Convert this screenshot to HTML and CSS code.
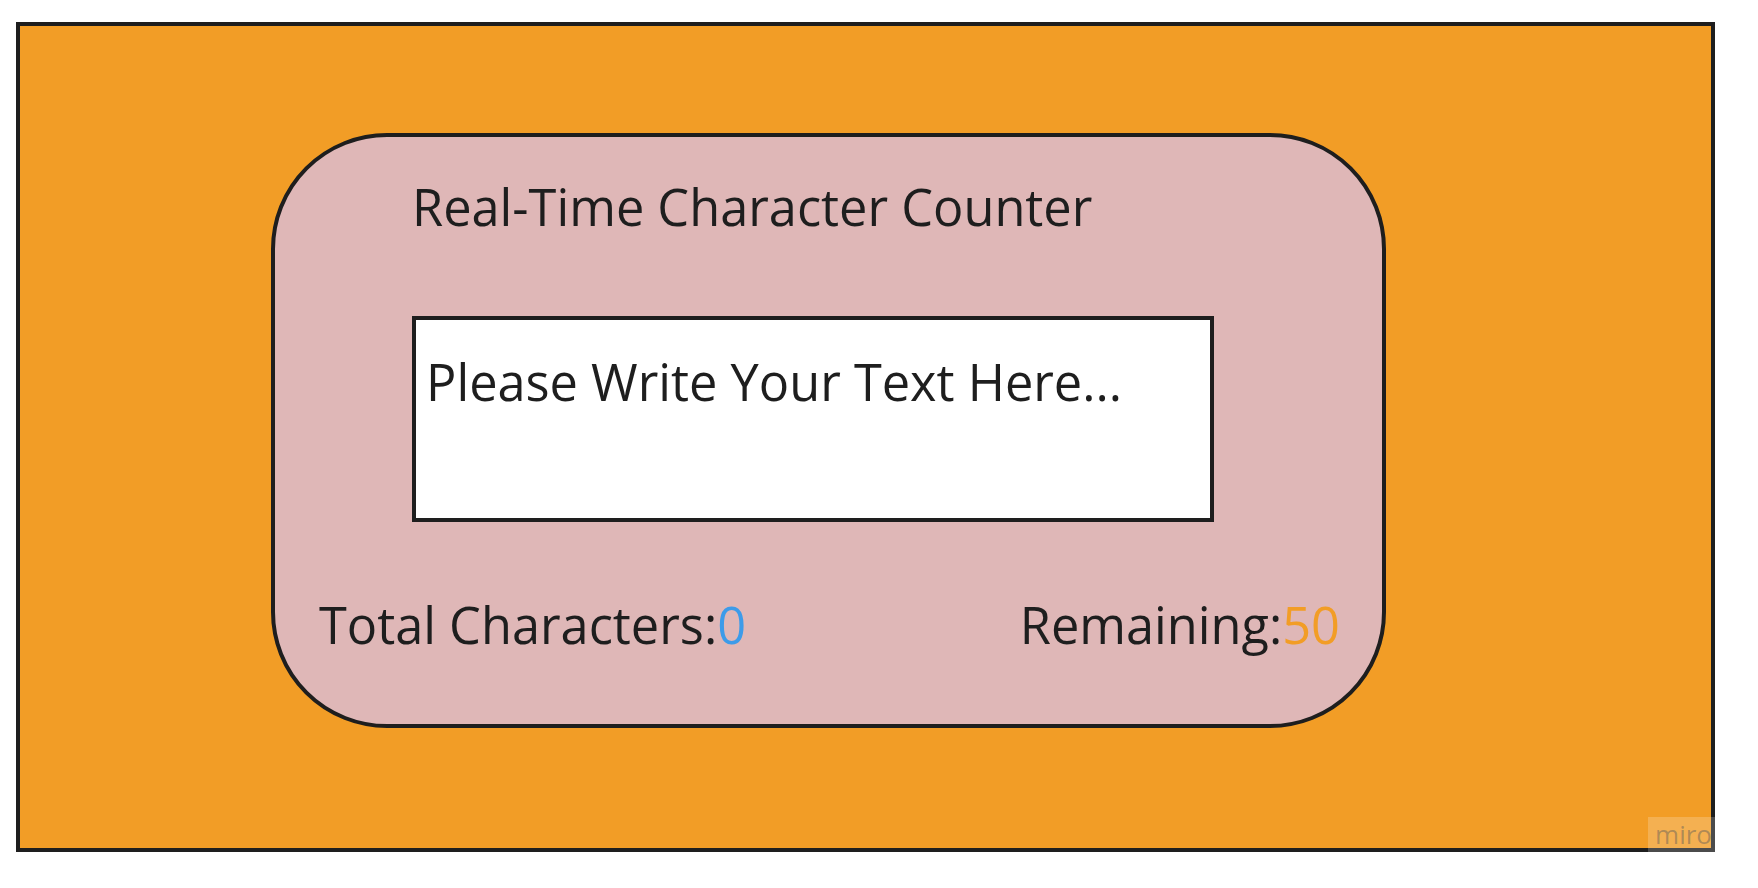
FILE: index.html
```html
<!DOCTYPE html>
<html lang="en">
<head>
<meta charset="utf-8">
<title>Real-Time Character Counter</title>
<link rel="stylesheet" href="styles.css">
</head>
<body>
<div class="board">
  <div class="card">
    <h1 class="title">Real-Time Character Counter</h1>
    <textarea class="input" placeholder="Please Write Your Text Here..."></textarea>
    <div class="stats">
      <div class="stat">Total Characters:<span class="total">0</span></div>
      <div class="stat">Remaining:<span class="remaining">50</span></div>
    </div>
  </div>
  <div class="watermark">miro</div>
</div>
</body>
</html>
```
FILE: styles.css
```css
html, body {
  margin: 0;
  padding: 0;
  background: #ffffff;
}
body {
  font-family: "Open Sans", "Noto Sans", sans-serif;
  color: #1e1e1e;
  padding: 22px 0 0 16px;
}
.board {
  position: relative;
  box-sizing: border-box;
  width: 1699px;
  height: 830px;
  background: #f29d26;
  border: 4px solid #1e1e1e;
  padding: 107px 0 0 251px;
}
.card {
  box-sizing: border-box;
  width: 1115px;
  height: 595px;
  background: #dfb7b7;
  border: 4px solid #1e1e1e;
  border-radius: 116px;
  padding-top: 37px;
  display: flex;
  flex-direction: column;
}
.title {
  margin: 0 0 76px 137px;
  font-size: 50.5px;
  font-weight: 400;
  line-height: 66px;
  color: #1e1e1e;
}
.input {
  box-sizing: border-box;
  margin: 0 0 0 137px;
  width: 802px;
  height: 206px;
  border: 4px solid #1e1e1e;
  background: #ffffff;
  padding: 29px 10px 0 10px;
  font-family: "Open Sans", "Noto Sans", sans-serif;
  font-size: 50.5px;
  line-height: 66px;
  color: #1e1e1e;
  resize: none;
  overflow: hidden;
  outline: none;
  border-radius: 0;
}
.input::placeholder {
  color: #1e1e1e;
  opacity: 1;
}
.stats {
  margin-top: 70px;
  padding: 0 42px 0 44px;
  display: flex;
  justify-content: space-between;
  font-size: 50.5px;
  line-height: 66px;
}
.total {
  color: #3d9be9;
}
.remaining {
  color: #f29d26;
}
.watermark {
  position: absolute;
  right: -4px;
  bottom: -4px;
  width: 67px;
  height: 35px;
  box-sizing: border-box;
  background: rgba(255, 255, 255, 0.2);
  color: rgba(90, 90, 90, 0.45);
  font-family: "Open Sans", sans-serif;
  font-size: 26px;
  line-height: 35px;
  text-align: right;
  padding-right: 3px;
}
```
